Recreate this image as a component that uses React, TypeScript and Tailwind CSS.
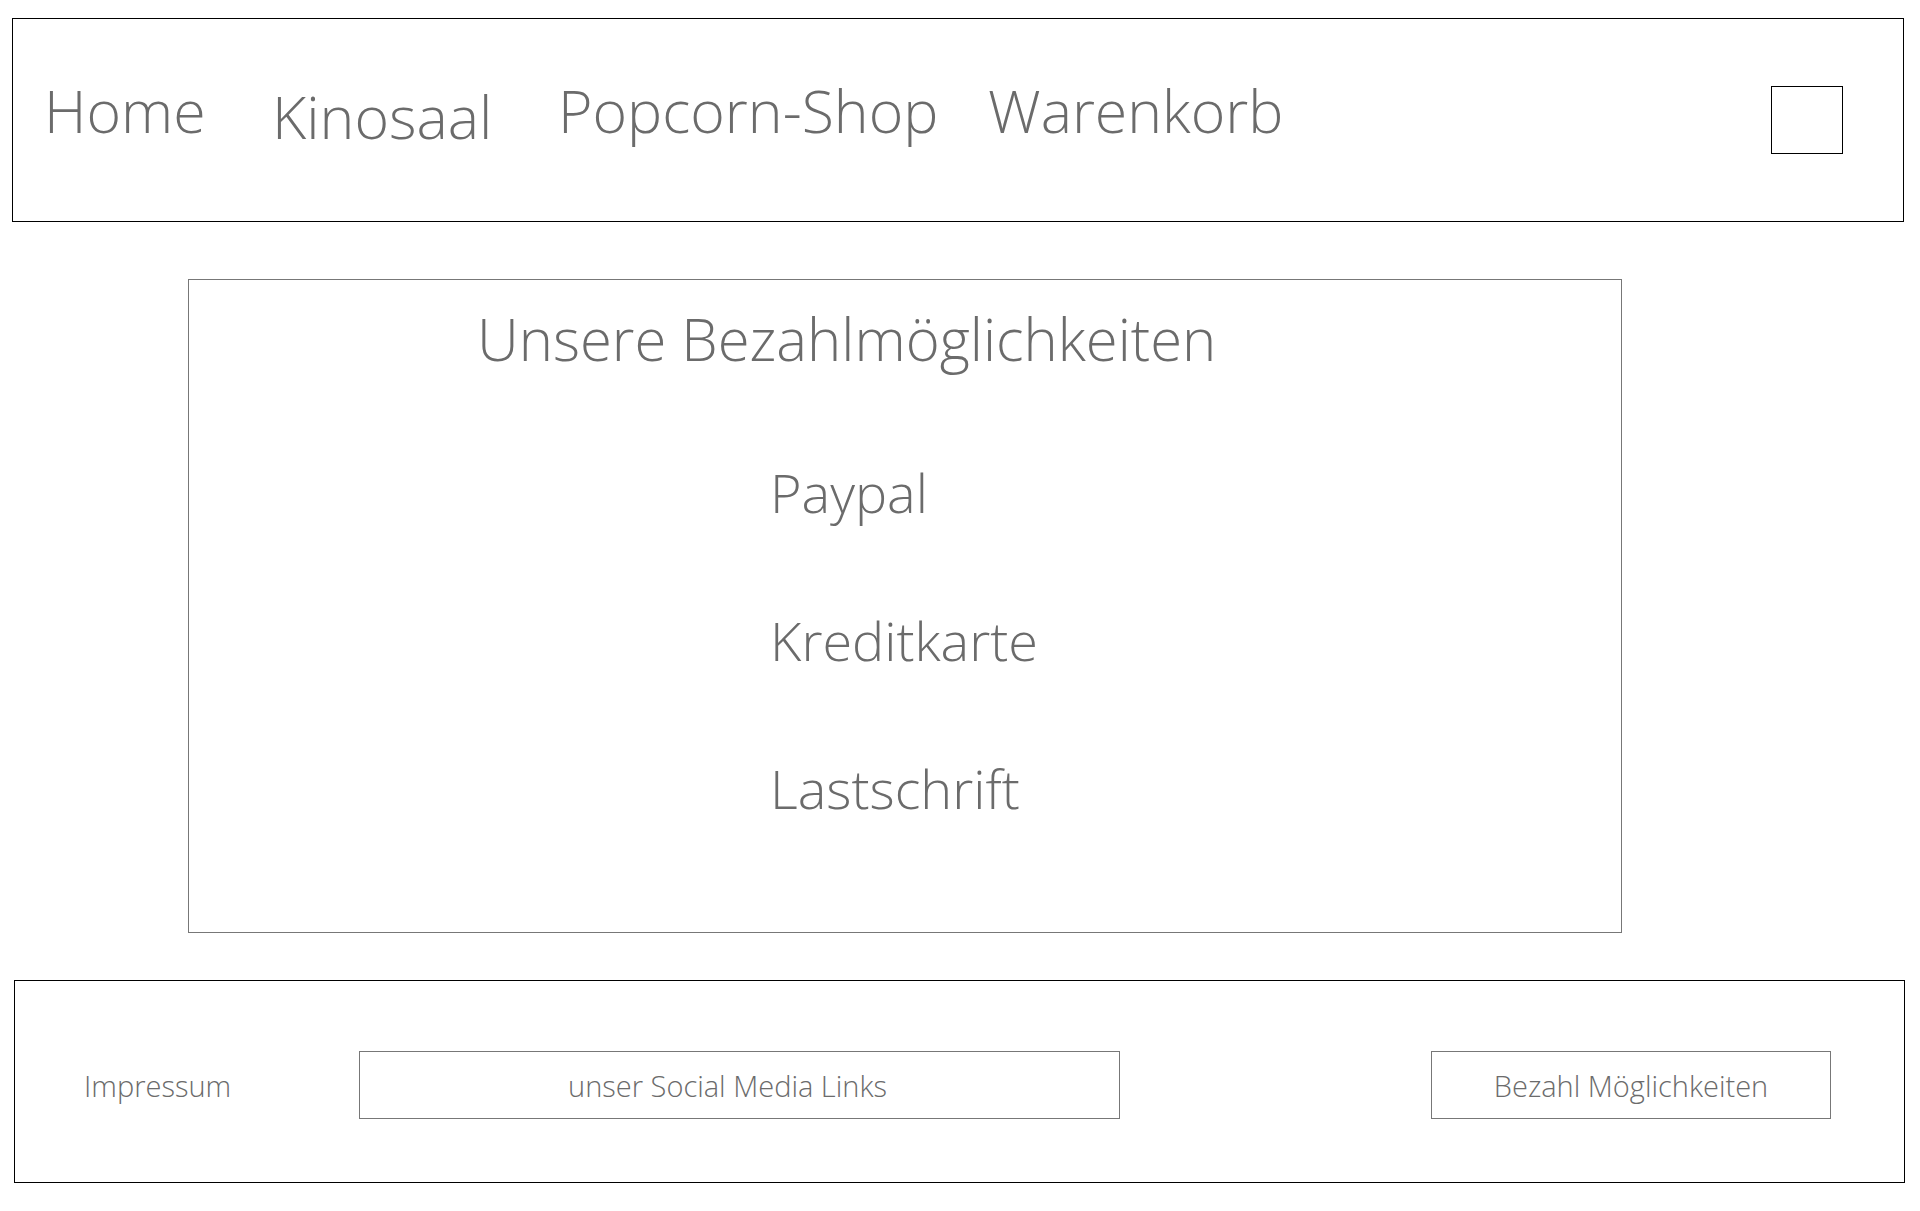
import React from "react";

const NAV = [
  { name: "Home", width: "w-[228px]", offset: "mt-0" },
  { name: "Kinosaal", width: "w-[286px]", offset: "mt-[6px]" },
  { name: "Popcorn-Shop", width: "w-[430px]", offset: "mt-0" },
  { name: "Warenkorb", width: "w-[300px]", offset: "mt-0" },
];

const PAYMENTS = ["Paypal", "Kreditkarte", "Lastschrift"];

function Header() {
  return (
    <header className="ml-[12px] flex h-[204px] w-[1892px] justify-between border border-black">
      <nav className="flex pl-[31px] pt-[62px]">
        {NAV.map((item) => (
          <a
            key={item.name}
            href="#"
            className={`${item.width} ${item.offset} text-[59px] leading-none font-light text-[#6b6b6b]`}
          >
            {item.name}
          </a>
        ))}
      </nav>
      {/* cart placeholder */}
      <div className="mr-[60px] mt-[67px] h-[68px] w-[72px] border border-black" />
    </header>
  );
}

function PaymentBox() {
  return (
    <section className="ml-[188px] mt-[57px] h-[654px] w-[1434px] border border-[#777777]">
      <h1 className="pl-[288px] pt-[30px] text-[58px] leading-none font-light text-[#6b6b6b]">
        Unsere Bezahlmöglichkeiten
      </h1>
      <ul className="mt-[97px] flex flex-col gap-[94px] pl-[581px]">
        {PAYMENTS.map((p) => (
          <li key={p} className="text-[54px] leading-none font-light text-[#6b6b6b]">
            {p}
          </li>
        ))}
      </ul>
    </section>
  );
}

function Footer() {
  return (
    <footer className="ml-[14px] mt-[47px] flex h-[203px] w-[1891px] items-center border border-black pt-[6px] text-[29px] font-light text-[#6b6b6b]">
      <span className="ml-[69px] mt-[3px] w-[275px]">Impressum</span>
      <a
        href="#"
        className="flex h-[68px] w-[761px] items-center justify-center border border-[#777777] pt-[3px] pr-[24px]"
      >
        unser Social Media Links
      </a>
      <a
        href="#"
        className="ml-[311px] flex h-[68px] w-[400px] items-center justify-center border border-[#777777] pt-[3px]"
      >
        Bezahl Möglichkeiten
      </a>
    </footer>
  );
}

export default function App() {
  return (
    <div className="min-h-[1211px] bg-white pt-[18px] font-['Open_Sans',sans-serif]">
      <Header />
      <PaymentBox />
      <Footer />
    </div>
  );
}
